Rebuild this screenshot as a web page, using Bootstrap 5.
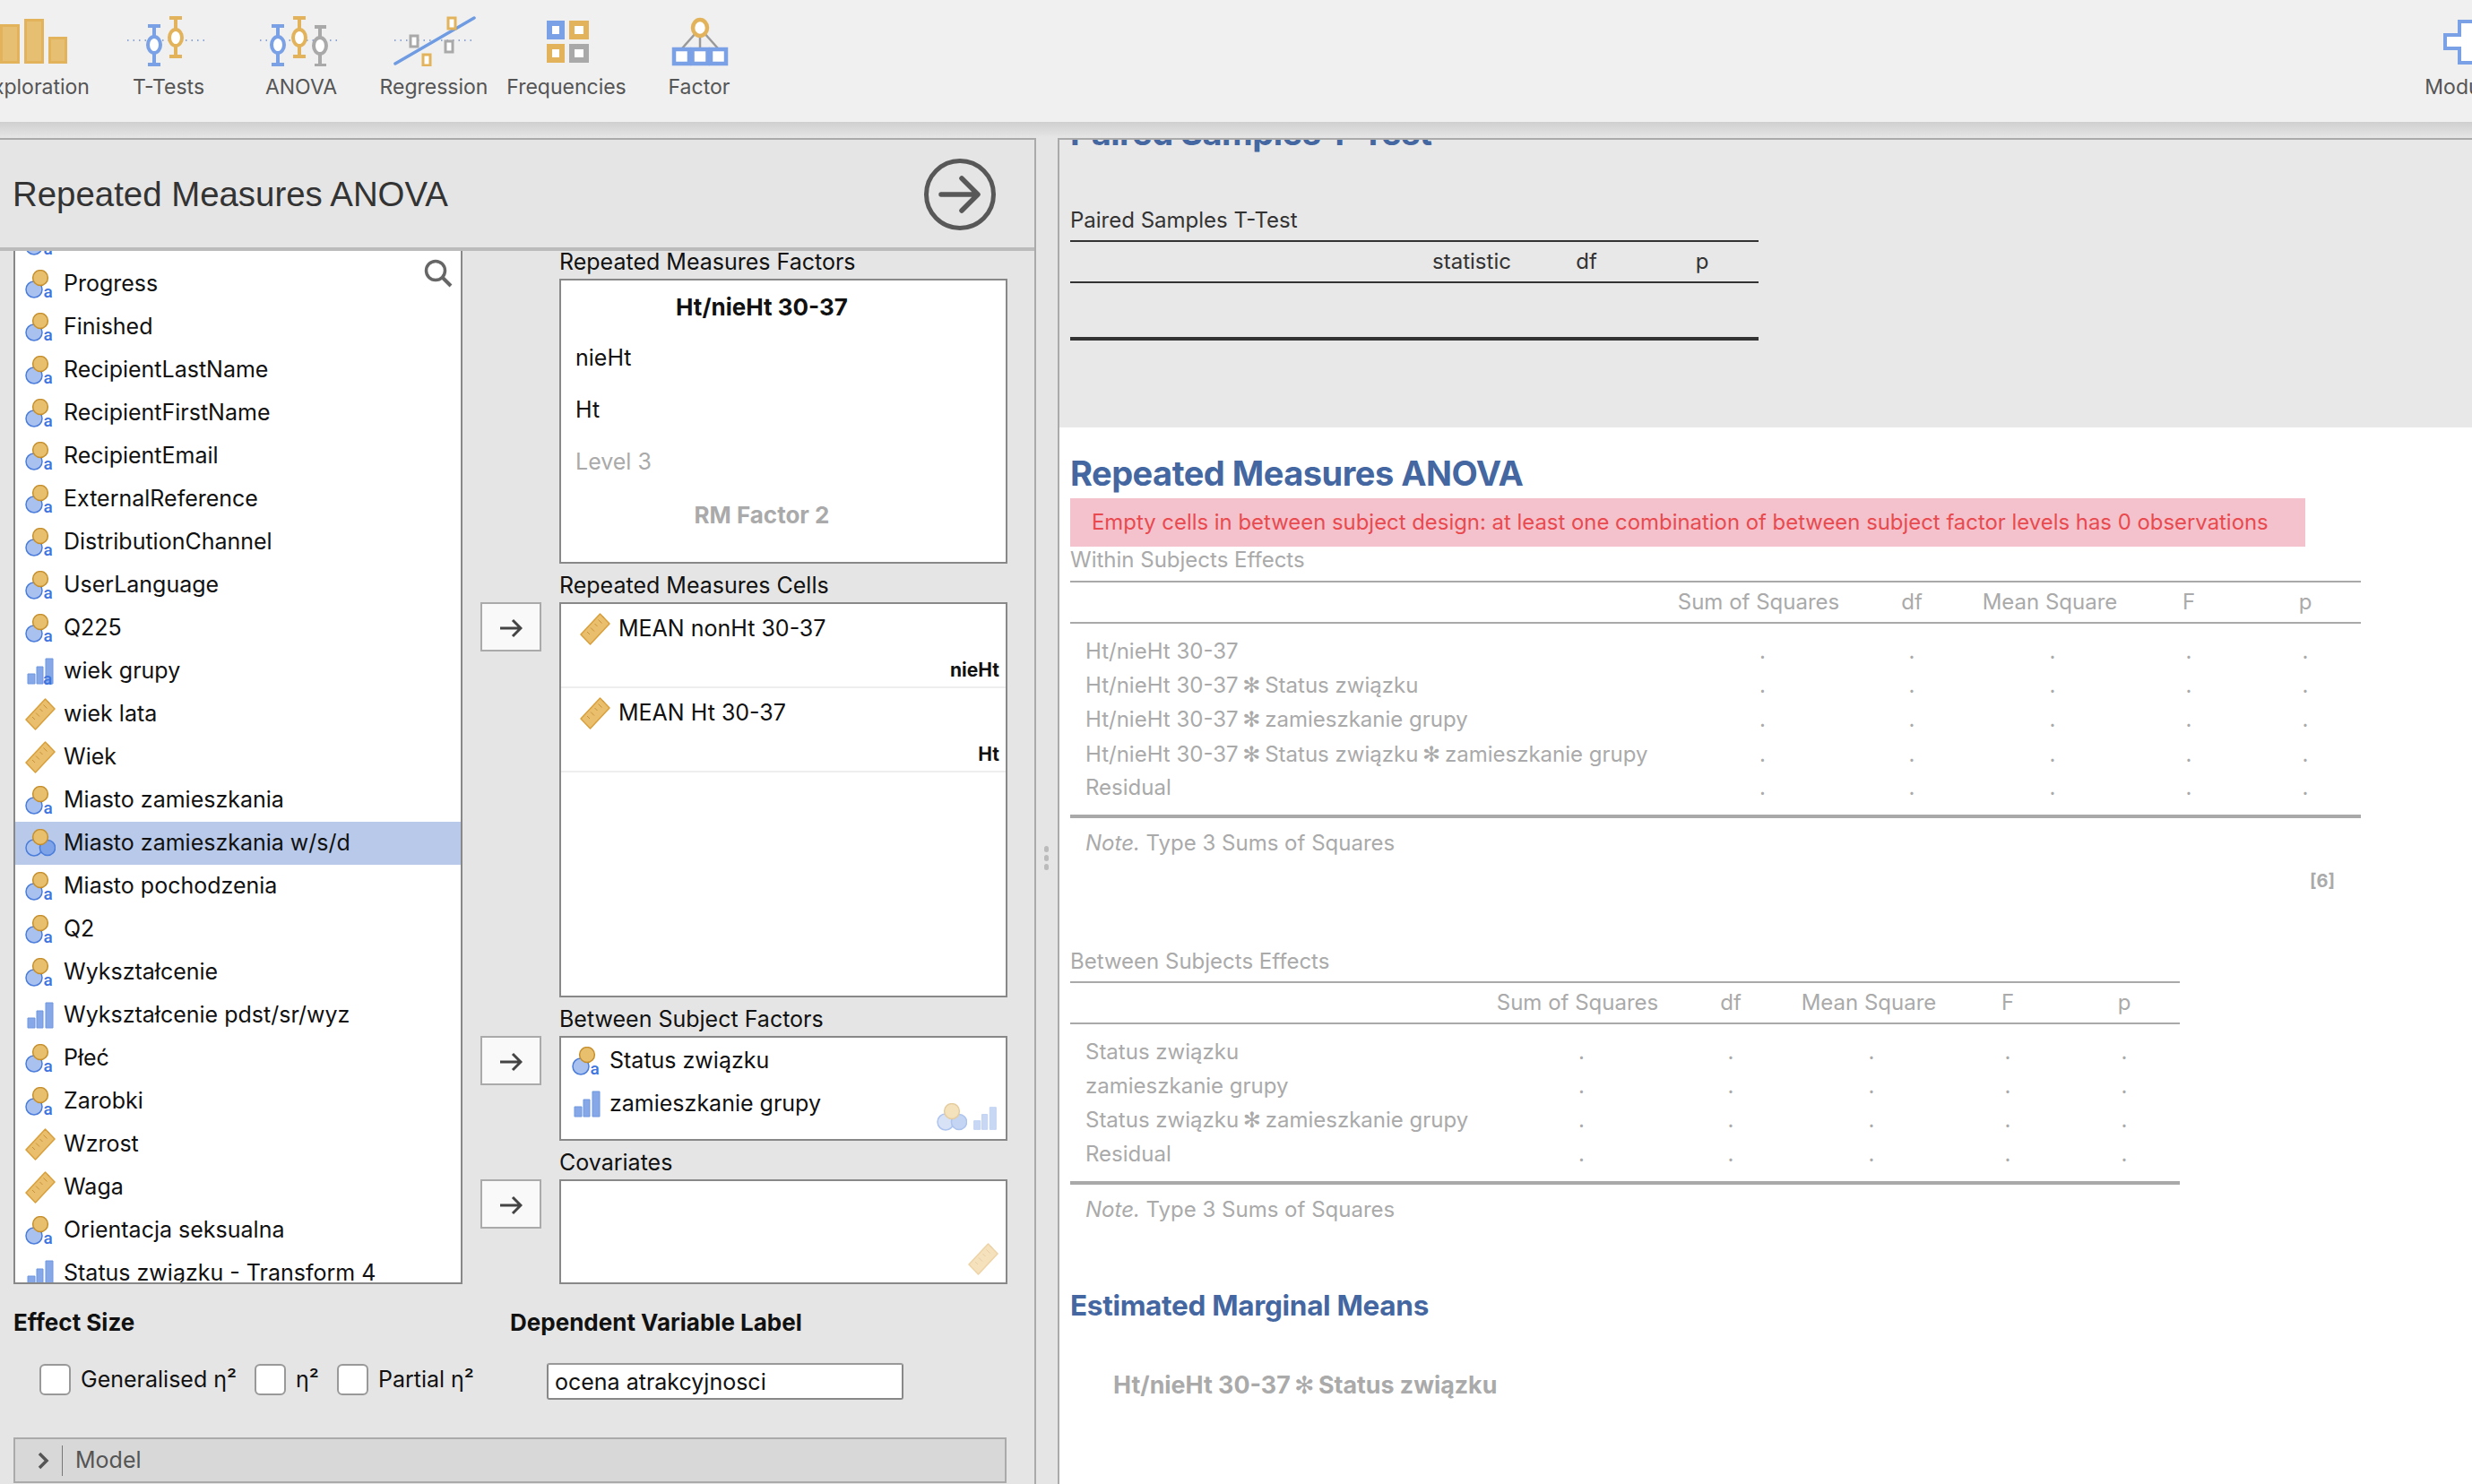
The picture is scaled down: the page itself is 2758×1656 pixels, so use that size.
<!DOCTYPE html>
<html lang="en">
<head>
    <meta charset="UTF-8">
    <meta name="viewport" content="width=device-width, initial-scale=1.0">
    <title>Repeated Measures ANOVA</title>
    <link rel="stylesheet" href="https://cdn.jsdelivr.net/npm/bootstrap@5.3.0/dist/css/bootstrap.min.css">
    <script src="https://cdn.jsdelivr.net/npm/bootstrap@5.3.0/dist/js/bootstrap.bundle.min.js"></script>
    <style>
        body { background: #e5e5e5; height: 1656px; overflow: hidden; font-family: Inter, "DejaVu Sans", sans-serif; color: #111; }

        /* ribbon */
        .ribbon { height: 136px; background: #f0f0f0; overflow: hidden; }
        .rib-item { width: 148px; flex: none; text-align: center; padding-top: 18px; font-size: 23px; line-height: 30px; color: #555; }
        .rib-item svg { display: block; margin: 0 auto 8px; }
        .rib-first { margin-left: -35px; margin-right: 1px; }
        .rib-last { margin-right: -68px; }
        .ribbon-shade { height: 18px; background: linear-gradient(#cfcfcf, #e6e6e6); }

        /* options panel */
        .opt-panel { width: 1156px; height: 1502px; flex: none; border-top: 2px solid #aaa; border-right: 2px solid #aaa; overflow: hidden; }
        .opt-head { height: 118px; padding: 2px 42px 0 14px; border-bottom: 4px solid #bbb; box-sizing: content-box; }
        .opt-title { font-family: "Liberation Sans", sans-serif; font-size: 38.4px; color: #333; margin: 0; }
        .var-box { width: 501px; height: 1153px; margin-left: 15px; background: #fff; border: solid #888; border-width: 0 2px 2px; overflow: hidden; position: relative; }
        .var-list { margin-top: -35px; background: transparent; }
        .var-row { height: 48px; padding: 0 0 0 11px; border: 0; background: transparent; color: #111; font-size: 25px; display: flex; align-items: center; gap: 9px; }
        .var-row svg { flex: none; }
        .var-row.picked { background: #b8c9e9; }
        .find-icon { position: absolute; top: 9px; right: 9px; }

        .tgt-col { width: 588px; margin-left: 20px; margin-top: -3px; }
        .tgt-group { display: grid; grid-template-columns: 68px 500px; column-gap: 20px; margin-bottom: 9px; }
        .tgt-label { grid-column: 2; font-size: 25px; line-height: 30px; margin-bottom: 4px; white-space: nowrap; }
        .tgt-box { grid-column: 2; background: #fff; border: 2px solid #888; position: relative; font-size: 25px; }
        .move-btn { grid-column: 1; width: 68px; height: 55px; padding: 0; background: #f9f9f9; border: 2px solid #aaa; border-radius: 0; }
        .fac-rows { height: 318px; padding-top: 0; }
        .fac-row { height: 58px; padding-left: 16px; display: flex; align-items: center; }
        .fac-head { justify-content: center; font-weight: 700; font-size: 26px; padding: 0 48px 0 0; }
        .fac-ghost { color: #aaa; }
        .cell-rows { height: 441px; }
        .cell-row { height: 94px; border-bottom: 2px solid #eee; padding: 9px 7px 0 21px; }
        .cell-name { display: flex; align-items: center; gap: 9px; }
        .cell-level { text-align: right; font-weight: 700; font-size: 21px; line-height: 26px; margin-top: 14px; }
        .bet-rows { height: 117px; padding-top: 2px; }
        .cov-rows { height: 117px; }
        .bet-row { height: 48px; padding-left: 12px; display: flex; align-items: center; gap: 8px; }
        .hint { position: absolute; right: 8px; bottom: 8px; opacity: .45; display: flex; gap: 5px; align-items: flex-end; }

        .opts-lower { height: 171px; padding-top: 27px; }
        .sec-title { font-weight: 700; font-size: 26px; line-height: 32px; margin: 0; }
        .eff-col { width: 569px; padding-left: 15px; }
        .dep-col { padding-left: 0; }
        .chk-row { margin-top: 29px; padding-left: 29px; font-size: 25px; }
        .chk-row label { margin-right: 20px; white-space: nowrap; }
        .chk-box.form-check-input { width: 35px; height: 35px; margin: 0 11px 0 0; float: none; flex: none; border: 2px solid #999; border-radius: 6px; }
        .dep-input.form-control { width: 398px; height: 41px; margin: 29px 0 0 41px; padding: 0 7px; font-size: 25px; color: #111; border: 2px solid #888; border-top-color: #999; border-radius: 3px; }
        .model-bar { height: 51px; width: 1108px; margin-left: 15px; background: #d8d8d8; border: 2px solid #aaa; color: #555; font-size: 25px; padding-left: 24px; }
        .model-bar i { width: 1px; height: 34px; background: #777; margin: 0 14px 0 14px; }

        /* splitter */
        .split { width: 24px; flex: none; padding-top: 790px; }
        .split span { display: block; width: 5px; height: 7px; border-radius: 3px; background: #bbb; margin: 0 0 3px 9px; }

        /* results */
        .res-panel { flex: 1; height: 1502px; background: #fff; border-top: 2px solid #aaa; border-left: 2px solid #aaa; overflow: hidden; }
        .old-sec { height: 321px; background: #e8e8e8; padding: 0 12px; overflow: hidden; }
        .new-sec { padding: 0 12px; }
        .res-h1 { font-size: 38px; line-height: 46px; font-weight: 700; color: #4567a1; margin: 0; letter-spacing: -.5px; }
        .res-h1-clipped { margin-top: -31px; }
        .res-h1-first { padding-top: 28px; }
        .res-h2 { font-size: 31.500px; line-height: 40px; font-weight: 700; color: #4567a1; margin: 71px 0 0; letter-spacing: -.3px; }
        .res-h3 { font-size: 26.800px; line-height: 36px; font-weight: 700; color: #aaa; margin: 50px 0 0 48px; }
        .star { margin: 0 -2px; }
        .cap-old { font-size: 24px; line-height: 34px; color: #333; margin-top: 58px; }
        .cap-grey { font-size: 24px; line-height: 30px; color: #aaa; }
        .cap-between { margin-top: 63px; }
        .warn.alert { width: 1378px; height: 54px; margin: 5px 0 0; padding: 0 24px; border: 0; border-radius: 0; background: #f4c2cc; color: #e84a4f; font-size: 23.900px; line-height: 54px; white-space: nowrap; }

        .res-table.table { table-layout: fixed; margin: 0; font-size: 24px; --bs-table-bg: transparent; --bs-table-color: #aaa; color: #aaa; border-top: 2px solid #a9a9a9; border-bottom: 4px solid #a9a9a9; }
        .res-table thead tr { border-bottom: 2px solid #a9a9a9; }
        .res-table th { height: 46px; padding: 0; font-weight: 400; text-align: center; vertical-align: middle; border: 0; }
        .res-table td { height: 38.500px; padding: 0; text-align: center; vertical-align: middle; border: 0; white-space: nowrap; }
        .res-table td:first-child { text-align: left; padding-left: 17px; }
        .res-table td:nth-child(2) { padding-left: 9px; }
        .res-table td:nth-child(4) { padding-left: 6px; }
        .res-table tbody tr:first-child td { height: 50.500px; padding-top: 12px; }
        .res-table tbody tr:last-child td { height: 50px; padding-bottom: 12px; }
        .tbl-old.table { --bs-table-color: #333; color: #333; border-color: #333; }
        .tbl-old thead tr { border-color: #333; }
        .tbl-old tbody tr:first-child td { height: 63px; padding: 0; }
        .tbl-within { width: 1440px; margin-top: 8px !important; }
        .tbl-between { width: 1238px; margin-top: 7px !important; }
        .tbl-paired { width: 768px; margin-top: 5px !important; }
        .note-line { font-size: 24px; line-height: 32px; color: #aaa; margin-top: 12px; padding-left: 17px; }
        .ref-mark { width: 1440px; text-align: right; padding-right: 29px; font-size: 20px; font-weight: 700; line-height: 24px; color: #aaa; margin-top: 14px; }
    </style>
</head>
<body>
    <!-- shared variable icons -->
    <svg width="0" height="0" class="d-block position-absolute">
        <defs>
            <symbol id="ic-nomtext" viewBox="0 0 34 32">
                <circle cx="10" cy="22" r="9" fill="#a9c1ee" stroke="#4a7ddb" stroke-width="1.500"/>
                <circle cx="17" cy="9" r="8.400" fill="#e8bf6c" stroke="#c58f2d" stroke-width="1.500"/>
                <text x="20.500" y="30.500" font-family="Roboto, sans-serif" font-size="19" font-weight="500" fill="#3e74de">a</text>
            </symbol>
            <symbol id="ic-nom" viewBox="0 0 34 32">
                <circle cx="10" cy="21" r="9" fill="#a9c1ee" stroke="#4a7ddb" stroke-width="1.500"/>
                <circle cx="25" cy="21" r="8.600" fill="#7ea3e6" stroke="#4a7ddb" stroke-width="1.500"/>
                <circle cx="17" cy="9" r="8.400" fill="#e8bf6c" stroke="#c58f2d" stroke-width="1.500"/>
            </symbol>
            <symbol id="ic-ordtext" viewBox="0 0 34 32">
                <path d="M3 19h8v11H3zM13 11h7v19h-7zM23 2h8v28h-8z" fill="#86a8e8" stroke="#6f97e0"/>
                <text x="20" y="31" font-family="Roboto, sans-serif" font-size="19" font-weight="500" fill="#3e74de">a</text>
            </symbol>
            <symbol id="ic-ord" viewBox="0 0 34 32">
                <path d="M3 19h8v11H3zM13 11h7v19h-7zM23 2h8v28h-8z" fill="#86a8e8" stroke="#6f97e0"/>
            </symbol>
            <symbol id="ic-ruler" viewBox="0 0 34 36">
                <path d="M22.500 1 33 12 11.500 35 1 24z" fill="#e9bf6d" stroke="#d99f3b" stroke-width="1.500" stroke-linejoin="round"/>
                <path d="M8 21l3 3M12 16.500l4 4M16.500 12l3 3M20.500 7.500l4 4M25 3.500l2 2" stroke="#c9923a" stroke-width="1" fill="none"/>
            </symbol>
        </defs>
    </svg>

    <div class="ribbon d-flex">
        <div class="rib-item rib-first">
            <svg width="100" height="56" viewBox="0 0 100 56">
                <g fill="#e6bf72" stroke="#e2b35a" stroke-width="3">
                    <rect x="12.500" y="10.500" width="19" height="41"/><rect x="39.500" y="4.500" width="19" height="47"/><rect x="66.500" y="24.500" width="18" height="27"/>
                </g>
            </svg>
            Exploration
        </div>
        <div class="rib-item">
            <svg width="100" height="56" viewBox="0 0 100 56">
                <path d="M4 27H93" stroke="#6f8fc8" stroke-width="1.500" stroke-dasharray="1.500 5" fill="none"/>
                <path d="M27 11h14M34 11V54M27 54h14" stroke="#7aa0e6" stroke-width="4" fill="none"/>
                <ellipse cx="34" cy="32" rx="7" ry="9" fill="#fff" stroke="#7aa0e6" stroke-width="4"/>
                <path d="M51 2h14M58 2V45M51 45h14" stroke="#e2b35a" stroke-width="4" fill="none"/>
                <ellipse cx="58" cy="24" rx="7" ry="9" fill="#fff" stroke="#e2b35a" stroke-width="4"/>
            </svg>
            T-Tests
        </div>
        <div class="rib-item">
            <svg width="100" height="56" viewBox="0 0 100 56">
                <path d="M4 27H93" stroke="#6f8fc8" stroke-width="1.500" stroke-dasharray="1.500 5" fill="none"/>
                <path d="M17 11h14M24 11V54M17 54h14" stroke="#7aa0e6" stroke-width="4" fill="none"/>
                <ellipse cx="24" cy="32" rx="7" ry="9" fill="#fff" stroke="#7aa0e6" stroke-width="4"/>
                <path d="M41 2h14M48 2V45M41 45h14" stroke="#e2b35a" stroke-width="4" fill="none"/>
                <ellipse cx="48" cy="24" rx="7" ry="9" fill="#fff" stroke="#e2b35a" stroke-width="4"/>
                <path d="M65 12h13M71 12V55M65 55h13" stroke="#a9a9a9" stroke-width="4" fill="none"/>
                <ellipse cx="71" cy="33" rx="7" ry="9" fill="#fff" stroke="#a9a9a9" stroke-width="4"/>
            </svg>
            ANOVA
        </div>
        <div class="rib-item">
            <svg width="100" height="56" viewBox="0 0 100 56">
                <path d="M6 27H96" stroke="#6f8fc8" stroke-width="1.500" stroke-dasharray="1.500 5" fill="none"/>
                <path d="M7 53L95 2" stroke="#6f9be2" stroke-width="3.500" stroke-linecap="round" fill="none"/>
                <g fill="#fff" stroke-width="3">
                    <rect x="66" y="2" width="8" height="12" stroke="#e2b35a"/>
                    <rect x="24" y="22" width="8" height="12" stroke="#a9a9a9"/>
                    <rect x="63" y="28" width="8" height="12" stroke="#a9a9a9"/>
                    <rect x="38" y="43" width="8" height="12" stroke="#e2b35a"/>
                </g>
            </svg>
            Regression
        </div>
        <div class="rib-item">
            <svg width="100" height="56" viewBox="0 0 100 56">
                <g fill="#fff" stroke-width="6">
                    <rect x="31" y="8" width="14" height="15" stroke="#7aa0e6"/>
                    <rect x="56" y="8" width="16" height="15" stroke="#e2b35a"/>
                    <rect x="31" y="34" width="14" height="15" stroke="#e2b35a"/>
                    <rect x="56" y="34" width="16" height="15" stroke="#a9a9a9"/>
                </g>
            </svg>
            Frequencies
        </div>
        <div class="rib-item">
            <svg width="100" height="56" viewBox="0 0 100 56">
                <path d="M47 18L31 36M51 20V36M55 18L71 36" stroke="#999" stroke-width="2.500" fill="none"/>
                <ellipse cx="51" cy="13" rx="8" ry="9" fill="#fff" stroke="#e2b35a" stroke-width="4.500"/>
                <g fill="#fff" stroke="#7aa0e6" stroke-width="4.500">
                    <rect x="22" y="37" width="17" height="16"/><rect x="42.500" y="37" width="17" height="16"/><rect x="63" y="37" width="17" height="16"/>
                </g>
            </svg>
            Factor
        </div>
        <div class="rib-item rib-last ms-auto">
            <svg width="100" height="56" viewBox="0 0 100 56">
                <path d="M42 6H74V21H90V36H74V52H42V36H26V21H42z" fill="#fff" stroke="#7aa0e6" stroke-width="4"/>
            </svg>
            Modules
        </div>
    </div>
    <div class="ribbon-shade"></div>

    <div class="d-flex">
        <div class="opt-panel">
            <div class="opt-head d-flex align-items-center justify-content-between">
                <h1 class="opt-title">Repeated Measures ANOVA</h1>
                <svg width="82" height="82" viewBox="0 0 82 82">
                    <circle cx="41" cy="41" r="37.500" fill="none" stroke="#585858" stroke-width="5"/>
                    <path d="M20 41H60M43 23L61 41 43 59" fill="none" stroke="#585858" stroke-width="5.500" stroke-linecap="round" stroke-linejoin="round"/>
                </svg>
            </div>

            <div class="d-flex">
                <div class="var-box">
                    <ul class="list-group list-group-flush var-list">
                        <li class="list-group-item var-row"><svg width="34" height="32"><use href="#ic-nomtext"/></svg></li>
                        <li class="list-group-item var-row"><svg width="34" height="32"><use href="#ic-nomtext"/></svg>Progress</li>
                        <li class="list-group-item var-row"><svg width="34" height="32"><use href="#ic-nomtext"/></svg>Finished</li>
                        <li class="list-group-item var-row"><svg width="34" height="32"><use href="#ic-nomtext"/></svg>RecipientLastName</li>
                        <li class="list-group-item var-row"><svg width="34" height="32"><use href="#ic-nomtext"/></svg>RecipientFirstName</li>
                        <li class="list-group-item var-row"><svg width="34" height="32"><use href="#ic-nomtext"/></svg>RecipientEmail</li>
                        <li class="list-group-item var-row"><svg width="34" height="32"><use href="#ic-nomtext"/></svg>ExternalReference</li>
                        <li class="list-group-item var-row"><svg width="34" height="32"><use href="#ic-nomtext"/></svg>DistributionChannel</li>
                        <li class="list-group-item var-row"><svg width="34" height="32"><use href="#ic-nomtext"/></svg>UserLanguage</li>
                        <li class="list-group-item var-row"><svg width="34" height="32"><use href="#ic-nomtext"/></svg>Q225</li>
                        <li class="list-group-item var-row"><svg width="34" height="32"><use href="#ic-ordtext"/></svg>wiek grupy</li>
                        <li class="list-group-item var-row"><svg width="34" height="36"><use href="#ic-ruler"/></svg>wiek lata</li>
                        <li class="list-group-item var-row"><svg width="34" height="36"><use href="#ic-ruler"/></svg>Wiek</li>
                        <li class="list-group-item var-row"><svg width="34" height="32"><use href="#ic-nomtext"/></svg>Miasto zamieszkania</li>
                        <li class="list-group-item var-row picked"><svg width="34" height="32"><use href="#ic-nom"/></svg>Miasto zamieszkania w/s/d</li>
                        <li class="list-group-item var-row"><svg width="34" height="32"><use href="#ic-nomtext"/></svg>Miasto pochodzenia</li>
                        <li class="list-group-item var-row"><svg width="34" height="32"><use href="#ic-nomtext"/></svg>Q2</li>
                        <li class="list-group-item var-row"><svg width="34" height="32"><use href="#ic-nomtext"/></svg>Wykształcenie</li>
                        <li class="list-group-item var-row"><svg width="34" height="32"><use href="#ic-ord"/></svg>Wykształcenie pdst/sr/wyz</li>
                        <li class="list-group-item var-row"><svg width="34" height="32"><use href="#ic-nomtext"/></svg>Płeć</li>
                        <li class="list-group-item var-row"><svg width="34" height="32"><use href="#ic-nomtext"/></svg>Zarobki</li>
                        <li class="list-group-item var-row"><svg width="34" height="36"><use href="#ic-ruler"/></svg>Wzrost</li>
                        <li class="list-group-item var-row"><svg width="34" height="36"><use href="#ic-ruler"/></svg>Waga</li>
                        <li class="list-group-item var-row"><svg width="34" height="32"><use href="#ic-nomtext"/></svg>Orientacja seksualna</li>
                        <li class="list-group-item var-row"><svg width="34" height="32"><use href="#ic-ord"/></svg>Status związku - Transform 4</li>
                    </ul>
                    <svg class="find-icon" width="32" height="32" viewBox="0 0 32 32">
                        <circle cx="13" cy="13" r="10.500" fill="none" stroke="#666" stroke-width="3.500"/>
                        <path d="M21 21l9 9" stroke="#666" stroke-width="4"/>
                    </svg>
                </div>

                <div class="tgt-col">
                    <div class="tgt-group">
                        <div class="tgt-label">Repeated Measures Factors</div>
                        <div class="tgt-box fac-rows">
                            <div class="fac-row fac-head">Ht/nieHt 30-37</div>
                            <div class="fac-row">nieHt</div>
                            <div class="fac-row">Ht</div>
                            <div class="fac-row fac-ghost">Level 3</div>
                            <div class="fac-row fac-head fac-ghost">RM Factor 2</div>
                        </div>
                    </div>
                    <div class="tgt-group">
                        <div class="tgt-label">Repeated Measures Cells</div>
                        <button type="button" class="btn move-btn"><svg width="26" height="22" viewBox="0 0 26 22"><path d="M1 11H24M15 2l9 9-9 9" fill="none" stroke="#444" stroke-width="3"/></svg></button>
                        <div class="tgt-box cell-rows">
                            <div class="cell-row">
                                <div class="cell-name"><svg width="34" height="36"><use href="#ic-ruler"/></svg>MEAN nonHt 30-37</div>
                                <div class="cell-level">nieHt</div>
                            </div>
                            <div class="cell-row">
                                <div class="cell-name"><svg width="34" height="36"><use href="#ic-ruler"/></svg>MEAN Ht 30-37</div>
                                <div class="cell-level">Ht</div>
                            </div>
                        </div>
                    </div>
                    <div class="tgt-group">
                        <div class="tgt-label">Between Subject Factors</div>
                        <button type="button" class="btn move-btn"><svg width="26" height="22" viewBox="0 0 26 22"><path d="M1 11H24M15 2l9 9-9 9" fill="none" stroke="#444" stroke-width="3"/></svg></button>
                        <div class="tgt-box bet-rows">
                            <div class="bet-row"><svg width="34" height="32"><use href="#ic-nomtext"/></svg>Status związku</div>
                            <div class="bet-row"><svg width="34" height="32"><use href="#ic-ord"/></svg>zamieszkanie grupy</div>
                            <div class="hint"><svg width="34" height="32"><use href="#ic-nom"/></svg><svg width="30" height="30"><use href="#ic-ord"/></svg></div>
                        </div>
                    </div>
                    <div class="tgt-group mb-0">
                        <div class="tgt-label">Covariates</div>
                        <button type="button" class="btn move-btn"><svg width="26" height="22" viewBox="0 0 26 22"><path d="M1 11H24M15 2l9 9-9 9" fill="none" stroke="#444" stroke-width="3"/></svg></button>
                        <div class="tgt-box cov-rows">
                            <div class="hint"><svg width="34" height="36"><use href="#ic-ruler"/></svg></div>
                        </div>
                    </div>
                </div>
            </div>

            <div class="opts-lower d-flex">
                <div class="eff-col">
                    <p class="sec-title">Effect Size</p>
                    <div class="chk-row d-flex align-items-center">
                        <input class="form-check-input chk-box" type="checkbox" id="chkGen"><label for="chkGen">Generalised η²</label>
                        <input class="form-check-input chk-box" type="checkbox" id="chkEta"><label for="chkEta">η²</label>
                        <input class="form-check-input chk-box" type="checkbox" id="chkPart"><label for="chkPart">Partial η²</label>
                    </div>
                </div>
                <div class="dep-col">
                    <p class="sec-title">Dependent Variable Label</p>
                    <input type="text" class="form-control dep-input" value="ocena atrakcyjnosci">
                </div>
            </div>
            <div class="model-bar d-flex align-items-center">
                <svg width="14" height="20" viewBox="0 0 14 20"><path d="M3 2l8 8-8 8" fill="none" stroke="#555" stroke-width="3.500"/></svg>
                <i></i>Model
            </div>
        </div>

        <div class="split">
            <span></span><span></span><span></span>
        </div>

        <div class="res-panel">
            <div class="old-sec">
                <h2 class="res-h1 res-h1-clipped">Paired Samples T-Test</h2>
                <div class="cap-old">Paired Samples T-Test</div>
                <table class="table res-table tbl-old tbl-paired">
                    <colgroup><col style="width:386px"><col style="width:124px"><col style="width:132px"><col style="width:126px"></colgroup>
                    <thead><tr><th></th><th>statistic</th><th>df</th><th>p</th></tr></thead>
                    <tbody><tr><td></td><td></td><td></td><td></td></tr></tbody>
                </table>
            </div>
            <div class="new-sec">
                <h2 class="res-h1 res-h1-first">Repeated Measures ANOVA</h2>
                <div class="alert alert-danger warn">Empty cells in between subject design: at least one combination of between subject factor levels has 0 observations</div>
                <div class="cap-grey">Within Subjects Effects</div>
                <table class="table res-table tbl-within">
                    <colgroup><col style="width:664px"><col style="width:208px"><col style="width:134px"><col style="width:174px"><col style="width:136px"><col style="width:124px"></colgroup>
                    <thead><tr><th></th><th>Sum of Squares</th><th>df</th><th>Mean Square</th><th>F</th><th>p</th></tr></thead>
                    <tbody>
                        <tr><td>Ht/nieHt 30-37</td><td>.</td><td>.</td><td>.</td><td>.</td><td>.</td></tr>
                        <tr><td>Ht/nieHt 30-37 <span class="star">✻</span> Status związku</td><td>.</td><td>.</td><td>.</td><td>.</td><td>.</td></tr>
                        <tr><td>Ht/nieHt 30-37 <span class="star">✻</span> zamieszkanie grupy</td><td>.</td><td>.</td><td>.</td><td>.</td><td>.</td></tr>
                        <tr><td>Ht/nieHt 30-37 <span class="star">✻</span> Status związku <span class="star">✻</span> zamieszkanie grupy</td><td>.</td><td>.</td><td>.</td><td>.</td><td>.</td></tr>
                        <tr><td>Residual</td><td>.</td><td>.</td><td>.</td><td>.</td><td>.</td></tr>
                    </tbody>
                </table>
                <div class="note-line"><em>Note.</em> Type 3 Sums of Squares</div>
                <div class="ref-mark">[6]</div>
                <div class="cap-grey cap-between">Between Subjects Effects</div>
                <table class="table res-table tbl-between">
                    <colgroup><col style="width:462px"><col style="width:208px"><col style="width:134px"><col style="width:174px"><col style="width:136px"><col style="width:124px"></colgroup>
                    <thead><tr><th></th><th>Sum of Squares</th><th>df</th><th>Mean Square</th><th>F</th><th>p</th></tr></thead>
                    <tbody>
                        <tr><td>Status związku</td><td>.</td><td>.</td><td>.</td><td>.</td><td>.</td></tr>
                        <tr><td>zamieszkanie grupy</td><td>.</td><td>.</td><td>.</td><td>.</td><td>.</td></tr>
                        <tr><td>Status związku <span class="star">✻</span> zamieszkanie grupy</td><td>.</td><td>.</td><td>.</td><td>.</td><td>.</td></tr>
                        <tr><td>Residual</td><td>.</td><td>.</td><td>.</td><td>.</td><td>.</td></tr>
                    </tbody>
                </table>
                <div class="note-line"><em>Note.</em> Type 3 Sums of Squares</div>
                <h3 class="res-h2">Estimated Marginal Means</h3>
                <h4 class="res-h3">Ht/nieHt 30-37 <span class="star">✻</span> Status związku</h4>
            </div>
        </div>
    </div>
</body>
</html>
